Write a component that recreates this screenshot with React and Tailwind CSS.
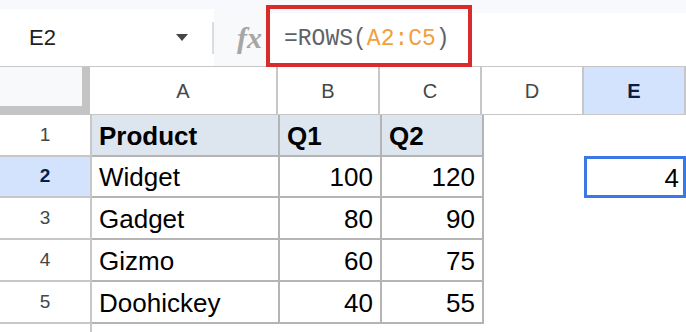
const rows = [
  { n: 1, a: "Product", b: "Q1", c: "Q2", head: true, h: "h-[42px]" },
  { n: 2, a: "Widget", b: "100", c: "120", sel: true, h: "h-[41px]" },
  { n: 3, a: "Gadget", b: "80", c: "90", h: "h-[42px]" },
  { n: 4, a: "Gizmo", b: "60", c: "75", h: "h-[42px]" },
  { n: 5, a: "Doohickey", b: "40", c: "55", h: "h-[42px]" },
]

const cols = [
  { l: "A", w: "w-[188px]" },
  { l: "B", w: "w-[102px]" },
  { l: "C", w: "w-[102px]" },
  { l: "D", w: "w-[102px]" },
  { l: "E", w: "w-[102px]", active: true },
]

const App = () => {
  return (
    <div className="relative w-[686px] h-[332px] overflow-hidden bg-white font-['Liberation_Sans',Arial,sans-serif]">
      {/* toolbar strip */}
      <div className="h-[9px] bg-[#f8f9fc]" />

      {/* formula bar */}
      <div className="flex h-[58px] border-b border-[#c7c7c7]">
        <div className="flex w-[214px] items-center bg-white">
          <span className="ml-[29px] text-[22px] text-[#1f1f1f]">E2</span>
          <div className="flex-1" />
          <div className="mr-[24px] h-0 w-0 border-x-[6px] border-t-[7px] border-x-transparent border-t-[#444746]" />
          <div className="h-[32px] w-[2px] bg-[#dadce0]" />
        </div>
        <div className="flex w-[52px] items-center justify-end bg-[#f8f9fa] pr-[4px]">
          <span className="font-['Liberation_Serif',serif] text-[30px] italic font-bold leading-none text-[#a6a6a6]">fx</span>
        </div>
        <div className="flex flex-1 flex-col bg-[#f8f9fc]">
          <div className="h-[4px]" />
          <div className="flex flex-1 items-center bg-white pl-[18px] font-['Liberation_Mono',monospace] text-[23px] text-[#5f6368]">
            =ROWS(<span className="text-[#f0a040]">A2:C5</span>)
          </div>
        </div>
      </div>

      {/* column headers */}
      <div className="flex h-[48px]">
        <div className="flex w-[92px] flex-col bg-[#c4c4c4]">
          <div className="h-[39px] w-[82px] bg-[#f8f9fa]" />
        </div>
        {cols.map((c) => (
          <div
            key={c.l}
            className={`${c.w} shrink-0 flex items-center justify-center border-r-2 border-b border-[#c7c7c7] text-[20px] ${
              c.active ? "bg-[#d3e3fd] font-bold text-[#0b1d45]" : "bg-white text-[#444746]"
            }`}
          >
            {c.l}
          </div>
        ))}
      </div>

      {/* data rows */}
      {rows.map((r) => (
        <div key={r.n} className={`flex ${r.h}`}>
          <div
            className={`flex w-[92px] shrink-0 items-center justify-center border-r-2 border-b-2 border-[#c7c7c7] text-[19px] ${
              r.sel ? "bg-[#d3e3fd] font-bold text-[#0b1d45]" : "bg-white text-[#444746]"
            }`}
          >
            {r.n}
          </div>
          <div
            className={`flex w-[188px] shrink-0 items-center border-r-2 border-b-2 border-[#b4b4b4] pl-[7px] pt-[2px] text-[26px] text-black ${
              r.head ? "bg-[#dde5ef] font-bold" : ""
            }`}
          >
            {r.a}
          </div>
          <div
            className={`flex w-[102px] shrink-0 items-center border-r-2 border-b-2 border-[#b4b4b4] pt-[2px] text-[26px] text-black ${
              r.head ? "bg-[#dde5ef] font-bold pl-[7px]" : "justify-end pr-[7px]"
            }`}
          >
            {r.b}
          </div>
          <div
            className={`flex w-[102px] shrink-0 items-center border-r-2 border-b-2 border-[#b4b4b4] pt-[2px] text-[26px] text-black ${
              r.head ? "bg-[#dde5ef] font-bold pl-[7px]" : "justify-end pr-[7px]"
            }`}
          >
            {r.c}
          </div>
          <div className="w-[102px] shrink-0" />
          <div className="relative flex w-[102px] shrink-0 items-center justify-end pr-[9px] pt-[2px] text-[26px] text-black">
            {r.sel && (
              <>
                <div className="absolute -left-[2px] -top-[1px] h-[42px] w-[102px] border-[3px] border-[#3a78e6]" />
                4
              </>
            )}
          </div>
        </div>
      ))}
      <div className="flex h-[10px]">
        <div className="w-[92px] border-r-2 border-[#c7c7c7]" />
      </div>

      {/* annotation box */}
      <div className="absolute left-[266px] top-[5px] h-[62px] w-[206px] border-4 border-[#d92b2b]" />
    </div>
  )
}

export default App
